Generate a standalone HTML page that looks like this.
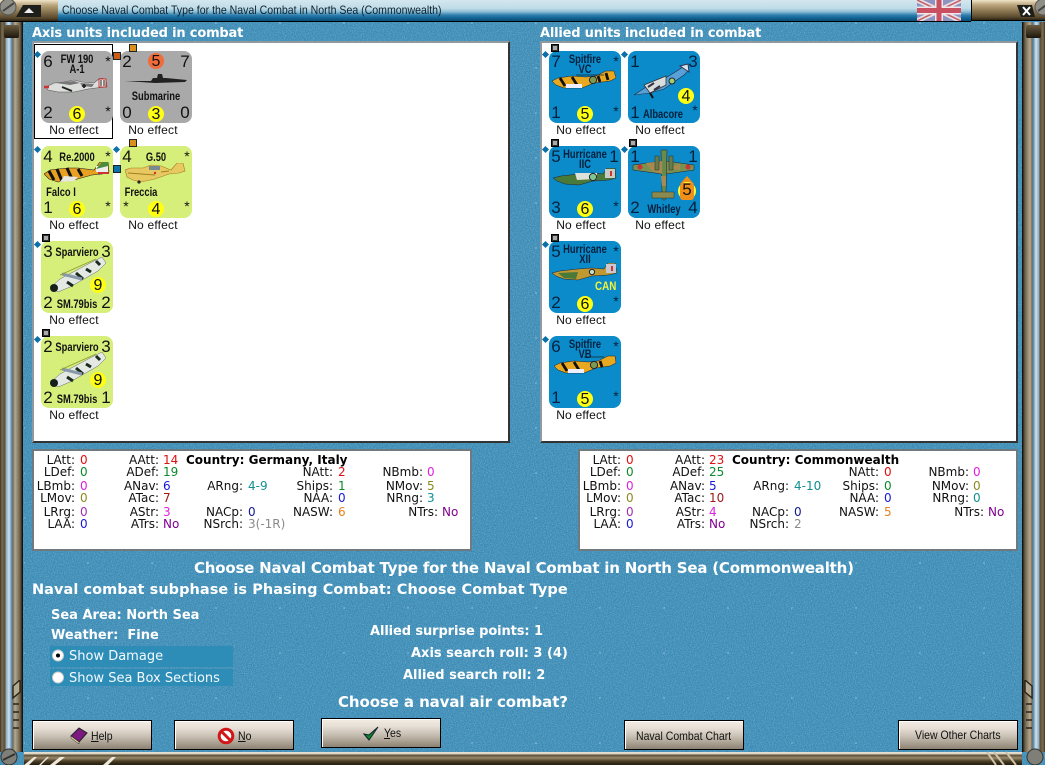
<!DOCTYPE html>
<html><head><meta charset="utf-8"><title>Naval Combat</title>
<style>
html,body{margin:0;padding:0;background:#3887b2}
#p{position:relative;width:1045px;height:765px;overflow:hidden;background:#3887b2;font-family:"Liberation Sans",sans-serif}
#p div,#p span,#p svg{position:absolute}
#dots{left:24px;top:22px;width:998px;height:730px;opacity:.55;background-image:radial-gradient(circle at 1px 1px,#dfeef6 .6px,transparent .9px);background-size:64px 45px;background-position:-1px 0}
.h{color:#fff;font:bold 13px "DejaVu Sans",sans-serif;white-space:nowrap;line-height:16px}
.w{left:32px;top:41px;width:474px;height:398px;background:#fff;border:2px solid;border-color:#8f9aa0 #333 #333 #8f9aa0}
.card{width:72px;height:72px;border-radius:8px;overflow:hidden}
.g{background:#a9a9a9;color:#111}.l{background:#d6ee7a;color:#111}.b{background:#0b8bc9;color:#04203c}
.n{font-size:17px;line-height:18px;width:14px;text-align:center}
.tl{left:0;top:2px}.tr{right:0;top:2px}.bl{left:0;bottom:1px}.br{right:0;bottom:1px}
.st{font-size:14px;line-height:14px;width:10px;text-align:center}
.str{right:0;top:3px}.sbr{right:0;bottom:5px}
.nm{left:-10px;width:92px;text-align:center;font-weight:bold;font-size:12px;line-height:12px;transform:scaleX(.78);white-space:nowrap}
.cy{border-radius:50%;background:#ffff14;width:16px;height:16px;color:#111;font-size:16px;line-height:17px;text-align:center}
.ctr{left:28px;bottom:1px}
.ne{font-size:12px;color:#111;width:72px;text-align:center;line-height:14px;white-space:nowrap;margin-top:-1px;letter-spacing:.2px}
.dia{width:5px;height:5px;background:#0b6fa8;transform:rotate(45deg)}
.sq{width:6px;height:6px;border:1px solid #000;background:#aaa;box-shadow:0 0 0 1px #333 inset}
.sq2{width:6px;height:6px;border:1px solid #222;background:#d8901c}
.st-p{width:440px;height:102px;top:449px;background:#fff;border:2px solid #6e7a80;box-sizing:border-box;font:12px/13px "DejaVu Sans",sans-serif;color:#111}
.st-p span{white-space:nowrap}
.k{width:70px;text-align:right}
.c1{left:-29px}.c2{left:55px}.c3{left:139px}.c4{left:229px}.c5{left:319px}
.v1{left:46px}.v2{left:129px}.v3{left:214px}.v4{left:304px}.v5{left:393px}
.r1{top:3px}.r2{top:15px}.r3{top:29px}.r4{top:41px}.r5{top:55px}.r6{top:67px}
.R{color:#e01010}.G{color:#0a8a2a}.M{color:#e020e0}.O{color:#8a8a20}.Pu{color:#a030b0}.B{color:#1818d8}.T{color:#109090}.DR{color:#a01818}.N{color:#101890}.Or{color:#e88020}.Gy{color:#8a8a8a}.V{color:#800090}
.btn{width:118px;height:28px;border:1px solid #000;background:linear-gradient(#f3ece4 0,#e8e0d6 25%,#c8c0b4 55%,#a89f90 80%,#8c8373 100%);box-shadow:inset 1px 1px 0 #fff;font-size:12px;color:#111}
.btn span{white-space:nowrap;line-height:14px;transform-origin:0 0;transform:scaleX(.875)}
.frame{top:22px;width:23px;height:730px}
</style></head><body>
<div id="p">
<svg style="left:0;top:0" width="1045" height="765"><filter id="nz"><feTurbulence type="fractalNoise" baseFrequency="0.95" numOctaves="2" seed="4"/><feColorMatrix values="0 0 0 0 0.12  0 0 0 0 0.40  0 0 0 0 0.60  0 0 0 1.4 -.5"/></filter><rect width="1045" height="765" filter="url(#nz)"/><filter id="nz2"><feTurbulence type="fractalNoise" baseFrequency="0.9" numOctaves="2" seed="9"/><feColorMatrix values="0 0 0 0 0.36  0 0 0 0 0.62  0 0 0 0 0.78  0 0 0 1 -.45"/></filter><rect width="1045" height="765" filter="url(#nz2)"/></svg>
<div id="dots"></div>

<!-- title bar -->
<div style="left:58px;top:0;width:913px;height:21px;background:linear-gradient(#d3e7ef 0,#bfdce8 40%,#8fc0d6 55%,#2d7fae 72%,#0f5f90 88%,#0c4c74 100%);border-bottom:1px solid #000"></div>
<span style="left:62px;top:3px;font-size:12px;line-height:14px;color:#10202c;white-space:nowrap;transform-origin:0 0;transform:scaleX(.88)">Choose Naval Combat Type for the Naval Combat in North Sea (Commonwealth)</span>
<svg style="left:917px;top:0" width="44" height="21" viewBox="0 0 44 21"><rect width="44" height="21" fill="#8d94c0"/><path d="M0 0L44 21M44 0L0 21" stroke="#e8e0e4" stroke-width="5"/><path d="M0 0L44 21M44 0L0 21" stroke="#c8606c" stroke-width="1.6"/><path d="M22 0V21M0 10.5H44" stroke="#eee6ea" stroke-width="8"/><path d="M22 0V21M0 10.5H44" stroke="#c85060" stroke-width="5"/></svg>
<!-- top caps -->
<div style="left:0;top:0;width:58px;height:21px;background:linear-gradient(#efe4c8 0,#b9a47c 25%,#8a7650 55%,#5a4a2e 85%,#2c2414 100%);border-bottom:1px solid #000"></div>
<div style="left:971px;top:0;width:74px;height:21px;background:linear-gradient(#efe4c8 0,#b9a47c 25%,#8a7650 55%,#5a4a2e 85%,#2c2414 100%);border-left:1px solid #000;border-bottom:1px solid #000;box-sizing:border-box"></div>
<svg style="left:0;top:0" width="58" height="21"><circle cx="8" cy="7" r="8" fill="#8f8f88" stroke="#555"/><path d="M3 11L14 3" stroke="#444" stroke-width="2"/><path d="M16 17L23 5H41V17Z" fill="#1e1e1a"/><path d="M24 13L29 8L34 13Z" fill="#eee"/></svg>
<svg style="left:1010px;top:0" width="35" height="21"><path d="M7 5H22L25 17H11Z" fill="#1e1e1a"/><path d="M13 7L20 15M20 7L13 15" stroke="#fff" stroke-width="2"/><circle cx="33" cy="7" r="8" fill="#8f8f88" stroke="#555"/><path d="M28 11L39 3" stroke="#444" stroke-width="2"/></svg>

<!-- side frames -->
<div class="frame" style="left:0;background:linear-gradient(90deg,#3c3222 0,#7a6c50 2px,#5c4e36 5px,#8aa8be 6px,#cfe2ee 9px,#4f80a6 12px,#7a6e58 13px,#b5aa90 15px,#6c604a 20px,#2c2418 22px,#000 23px)"></div>
<div class="frame" style="left:1022px;background:linear-gradient(90deg,#000 0,#2c2418 1px,#6c604a 3px,#b5aa90 8px,#7a6e58 10px,#4f80a6 11px,#cfe2ee 14px,#8aa8be 17px,#5c4e36 18px,#7a6c50 21px,#3c3222 23px)"></div>
<div style="left:4px;top:25px;width:15px;height:13px;background:linear-gradient(#6c5c40,#1c160c);border-radius:2px"></div>
<div style="left:1026px;top:25px;width:15px;height:13px;background:linear-gradient(#6c5c40,#1c160c);border-radius:2px"></div>
<svg style="left:12px;top:680px" width="10" height="60"><path d="M1 6L8 0V12L1 18ZM1 24H7M1 32H7M1 40H7M1 48H7" stroke="#2a2418" stroke-width="1.4" fill="#b5aa90"/></svg>
<svg style="left:1023px;top:680px" width="10" height="60"><path d="M9 6L2 0V12L9 18ZM3 24H9M3 32H9M3 40H9M3 48H9" stroke="#2a2418" stroke-width="1.4" fill="#b5aa90"/></svg>
<!-- bottom bar -->
<div style="left:24px;top:752px;width:998px;height:13px;background:linear-gradient(#e8e4d8 0,#d8d0bc 2px,#5c4e36 3px,#98886a 6px,#4c4028 9px,#2a2212 12px)"></div>
<svg style="left:0;top:745px" width="120" height="20"><circle cx="9" cy="12" r="8" fill="#7f7f78" stroke="#333"/><path d="M3 15L15 9" stroke="#333" stroke-width="2"/><path d="M24 20L34 12H37L29 20ZM39 20L47 12H49L41 20ZM50 20L60 12H65L55 20ZM103 20L112 12H116L108 20Z" fill="#efe9dc"/></svg>
<svg style="left:980px;top:745px" width="65" height="20"><circle cx="55" cy="12" r="8" fill="#7f7f78" stroke="#333"/><path d="M7 7L16 20M14 7L24 20M26 7L36 20" stroke="#cfc4aa" stroke-width="2"/></svg>

<!-- headings -->
<div class="h" style="left:32px;top:26px;letter-spacing:-.18px">Axis units included in combat</div>
<div class="h" style="left:540px;top:26px;letter-spacing:-.2px">Allied units included in combat</div>

<div class="w"></div>
<div class="w" style="left:540px"></div>

<svg width="0" height="0" style="left:0;top:0"><defs>
<g id="bomb"><path d="M1 30L10 22 40 6 52 0 56 6 48 14 20 30 8 35Z" fill="#e4e9e4" stroke="#667" stroke-width=".5"/><circle cx="4" cy="31" r="4" fill="#15201a"/><path d="M17 25L23 29M26 16L33 22M36 12L41 15M46 4L50 8" stroke="#1a2a20" stroke-width="3"/><path d="M12 17L32 22" stroke="#89a" stroke-width="3"/><path d="M10 18L46 2" stroke="#8a9a30" stroke-width=".7"/></g>
</defs></svg>

<!-- selection box -->
<div style="left:34px;top:44px;width:77px;height:93px;border:1px solid #000"></div>

<!-- Axis cards -->
<div class="card g" style="left:41px;top:51px">
 <span class="n tl">6</span><span class="st str">*</span><span class="nm" style="top:2px">FW 190</span><span class="nm" style="top:12px">A-1</span>
 <svg style="left:3px;top:27px" width="64" height="16"><path d="M2 9L10 5 20 4 30 2 38 4 50 5 56 0 62 1 63 9 52 10 44 11 30 14 14 14 4 12Z" fill="#dcdedc" stroke="#555" stroke-width=".6"/><path d="M12 5L30 3 36 5 26 7ZM36 5L50 6 48 9 38 8Z" fill="#777"/><path d="M18 9L28 13M40 6V10M38 8H42" stroke="#222" stroke-width="1.8"/><path d="M55 1H62V9H55Z" fill="#eee" stroke="#c33"/><path d="M57 2V8M60 2V8" stroke="#222" stroke-width="1"/><path d="M0 9H5" stroke="#c33" stroke-width="2.4"/></svg>
 <span class="n bl">2</span><span class="cy ctr">6</span><span class="st sbr">*</span>
</div>
<div class="ne" style="left:38px;top:124px">No effect</div>
<div class="card g" style="left:120px;top:51px">
 <span class="n tl">2</span><span class="cy" style="left:28px;top:2px;background:#f06c38">5</span><span class="n tr">7</span>
 <svg style="left:5px;top:21px" width="62" height="14"><path d="M0 9L26 9 28 6H32L33 2H37L38 6H41L62 8 60 10 30 11Z" fill="#222"/></svg>
 <span class="nm" style="top:39px">Submarine</span>
 <span class="n bl">0</span><span class="cy ctr">3</span><span class="n br">0</span>
</div>
<div class="ne" style="left:117px;top:124px">No effect</div>

<div class="card l" style="left:41px;top:146px">
 <span class="n tl">4</span><span class="st str">*</span><span class="nm" style="top:5px">Re.2000</span>
 <svg style="left:3px;top:16px" width="66" height="22"><path d="M0 12L6 8 14 7 24 6 34 6 50 8 56 0 64 0 65 10 58 12 48 13 30 18 14 20 5 17Z" fill="#e8a020" stroke="#222" stroke-width=".6"/><path d="M5 9L10 18M13 7L18 19M23 6L28 17M34 7L38 14" stroke="#111" stroke-width="3"/><path d="M20 14L34 15 30 19 16 20Z" fill="#e8e8e0"/><path d="M52 4H64V10H52Z" fill="#eee"/><path d="M52 7L58 0H64V4Z" fill="#4a8c3a"/><path d="M54 10H65V12H54Z" fill="#c33"/></svg>
 <span class="nm" style="top:40px;left:-26px">Falco I</span>
 <span class="n bl">1</span><span class="cy ctr">6</span><span class="st sbr">*</span>
</div>
<div class="ne" style="left:38px;top:219px">No effect</div>
<div class="card l" style="left:120px;top:146px">
 <span class="n tl">4</span><span class="st str">*</span><span class="nm" style="top:5px">G.50</span>
 <svg style="left:5px;top:17px" width="64" height="22"><path d="M0 7L6 5 18 5 26 2 36 3 46 7 52 0 58 0 60 8 54 10 44 11 30 16 16 19 8 17 2 14Z" fill="#e8c860" stroke="#a08020" stroke-width=".6"/><path d="M24 3H35V7H24Z" fill="#7a8a90"/><path d="M3 10L30 12M36 9L44 8" stroke="#a08020"/><circle cx="14" cy="19" r="1.6" fill="#222"/><circle cx="30" cy="10" r="1.2" fill="#c33"/></svg>
 <span class="nm" style="top:40px;left:-25px">Freccia</span>
 <span class="st" style="left:1px;bottom:5px">*</span><span class="cy ctr">4</span><span class="st sbr">*</span>
</div>
<div class="ne" style="left:117px;top:219px">No effect</div>

<div class="card l" style="left:41px;top:241px">
 <span class="n tl">3</span><span class="nm" style="top:5px">Sparviero</span><span class="n tr">3</span>
 <svg style="left:9px;top:16px" width="56" height="36"><use href="#bomb"/></svg>
 <span class="cy" style="left:49px;top:36px">9</span>
 <span class="n bl">2</span><span class="nm" style="bottom:3px">SM.79bis</span><span class="n br">2</span>
</div>
<div class="ne" style="left:38px;top:314px">No effect</div>
<div class="card l" style="left:41px;top:336px">
 <span class="n tl">2</span><span class="nm" style="top:5px">Sparviero</span><span class="n tr">3</span>
 <svg style="left:9px;top:16px" width="56" height="36"><use href="#bomb"/></svg>
 <span class="cy" style="left:49px;top:36px">9</span>
 <span class="n bl">2</span><span class="nm" style="bottom:3px">SM.79bis</span><span class="n br">1</span>
</div>
<div class="ne" style="left:38px;top:409px">No effect</div>

<!-- Allied cards -->
<div class="card b" style="left:549px;top:51px">
 <span class="n tl">7</span><span class="st str">*</span><span class="nm" style="top:2px">Spitfire</span><span class="nm" style="top:12px">VC</span>
 <svg style="left:3px;top:19px" width="66" height="22"><path d="M0 11L6 8 20 6 34 7 44 6 54 1 62 1 64 8 58 11 42 13 30 18 12 18 4 15Z" fill="#e8a820" stroke="#222" stroke-width=".5"/><path d="M8 8L13 16M20 7L25 15M46 6L48 12M54 3L56 10" stroke="#111" stroke-width="2.8"/><circle cx="41" cy="10" r="3.6" fill="#7a9a50" stroke="#223"/><path d="M14 14H30V18H14Z" fill="#eef"/><path d="M24 5H52" stroke="#123" stroke-width=".7"/></svg>
 <span class="n bl">1</span><span class="cy ctr">5</span><span class="st sbr">*</span>
</div>
<div class="ne" style="left:545px;top:124px">No effect</div>
<div class="card b" style="left:628px;top:51px">
 <span class="n tl">1</span><span class="n tr">3</span>
 <svg style="left:6px;top:12px" width="58" height="36"><path d="M0 32L12 24 30 16 46 6 52 2 55 7 50 12 30 26 16 30Z" fill="#5aa0d8" stroke="#1a3040" stroke-width=".6"/><path d="M10 22L32 13 32 22 16 30Z" fill="#d8dede" stroke="#333" stroke-width=".8"/><path d="M14 24L20 20M20 27L26 23" stroke="#334" stroke-width="2"/><circle cx="38" cy="18" r="3" fill="#9ad070" stroke="#223"/><path d="M46 3L54 1 55 9Z" fill="#d8e4ee" stroke="#335"/><path d="M16 30L19 35" stroke="#111" stroke-width="2"/></svg>
 <span class="cy" style="left:50px;top:37px">4</span>
 <span class="n bl">1</span><span class="nm" style="bottom:3px;left:-11px">Albacore</span><span class="st sbr" style="bottom:6px">*</span>
</div>
<div class="ne" style="left:624px;top:124px">No effect</div>

<div class="card b" style="left:549px;top:146px">
 <span class="n tl">5</span><span class="nm" style="top:2px">Hurricane</span><span class="nm" style="top:12px">IIC</span><span class="n tr">1</span>
 <svg style="left:4px;top:22px" width="64" height="20"><path d="M0 10L8 8 26 6 40 5 50 6 54 0 62 0 63 10 56 12 40 13 26 17 12 16 4 13Z" fill="#4a7a3a" stroke="#223" stroke-width=".5"/><path d="M22 5L44 5 44 11 24 12Z" fill="#dfe2d8"/><path d="M52 1H62V10H52Z" fill="#c8ccc4"/><path d="M58 3V8" stroke="#c33" stroke-width="2"/><circle cx="40" cy="9" r="3.6" fill="#7ec890" stroke="#223"/></svg>
 <span class="n bl">3</span><span class="cy ctr">6</span><span class="st sbr">*</span>
</div>
<div class="ne" style="left:545px;top:219px">No effect</div>
<div class="card b" style="left:628px;top:146px">
 <span class="n tl">1</span><span class="n tr">1</span>
 <svg style="left:0;top:0" width="72" height="72"><path d="M5 19L34 15H38L66 19V24L38 28H34L5 24Z" fill="#7a9050" stroke="#223" stroke-width=".5"/><path d="M33 4H39L38 46 37 54H35L34 46Z" fill="#6a8a4a" stroke="#223" stroke-width=".5"/><path d="M18 17L34 15V28L24 25ZM40 22L52 18V24ZM33 30H38V40H34Z" fill="#a88a50"/><path d="M27 10h4v14h-4zM41 10h4v14h-4z" fill="#6a7a48" stroke="#233" stroke-width=".5"/><circle cx="12" cy="21" r="2.5" fill="#c33"/><circle cx="60" cy="21" r="2.5" fill="#c33"/><path d="M24 46H46V52H24Z" fill="#8a8a50" stroke="#332" stroke-width=".5"/></svg>
 <svg style="left:48px;top:26px" width="22" height="30"><path d="M4 12L11 4 18 12Z" fill="#f09018"/><circle cx="11" cy="19" r="9" fill="#ffff30"/><rect x="4" y="11" width="14" height="17" rx="3" fill="#f09018"/></svg>
 <span class="n" style="left:52px;top:35px;color:#111">5</span>
 <span class="n bl">2</span><span class="nm" style="bottom:3px;left:-10px">Whitley</span><span class="n br">4</span>
</div>
<div class="ne" style="left:624px;top:219px">No effect</div>

<div class="card b" style="left:549px;top:241px">
 <span class="n tl">5</span><span class="st str">*</span><span class="nm" style="top:2px">Hurricane</span><span class="nm" style="top:12px">XII</span>
 <svg style="left:3px;top:22px" width="66" height="20"><path d="M0 10L8 8 26 6 40 5 52 6 56 0 63 0 65 10 56 12 40 13 26 17 12 16 4 13Z" fill="#c09a30" stroke="#223" stroke-width=".5"/><path d="M6 10L26 9 24 16 12 15Z" fill="#4a7a3a"/><path d="M54 1H64V10H54Z" fill="#c8c8d0"/><path d="M60 3V8" stroke="#c33" stroke-width="2"/><circle cx="40" cy="9" r="2.6" fill="#c8dcc0" stroke="#223"/></svg>
 <span style="left:46px;top:39px;font-size:12px;font-weight:bold;color:#f4f43a;line-height:12px;transform-origin:0 0;transform:scaleX(.82)">CAN</span>
 <span class="n bl">2</span><span class="cy ctr">6</span><span class="st sbr">*</span>
</div>
<div class="ne" style="left:545px;top:314px">No effect</div>
<div class="card b" style="left:549px;top:336px">
 <span class="n tl">6</span><span class="st str">*</span><span class="nm" style="top:2px">Spitfire</span><span class="nm" style="top:12px">VB</span>
 <svg style="left:5px;top:19px" width="64" height="22"><path d="M0 11L6 8 20 6 34 7 44 6 54 1 61 1 62 8 56 11 42 13 30 18 12 18 4 15Z" fill="#e8a820" stroke="#222" stroke-width=".5"/><path d="M8 8L13 16M20 7L25 15M46 6L48 12" stroke="#111" stroke-width="2.8"/><circle cx="40" cy="10" r="3.6" fill="#7a9a50" stroke="#223"/><path d="M14 14H30V18H14Z" fill="#eef"/><path d="M30 2H50" stroke="#123" stroke-width=".7"/></svg>
 <span class="n bl">1</span><span class="cy ctr">5</span><span class="st sbr">*</span>
</div>
<div class="ne" style="left:545px;top:409px">No effect</div>

<!-- markers -->
<div class="dia" style="left:35px;top:52px"></div><div class="dia" style="left:35px;top:147px"></div><div class="dia" style="left:114px;top:147px"></div><div class="dia" style="left:35px;top:242px"></div><div class="dia" style="left:35px;top:337px"></div>
<div class="dia" style="left:543px;top:52px"></div><div class="dia" style="left:622px;top:52px"></div><div class="dia" style="left:543px;top:147px"></div><div class="dia" style="left:622px;top:147px"></div><div class="dia" style="left:543px;top:242px"></div><div class="dia" style="left:543px;top:337px"></div>
<div class="sq2" style="left:113px;top:52px;background:#c8601c"></div><div class="sq2" style="left:113px;top:165px;background:#0b70ae"></div>
<div class="sq2" style="left:129px;top:44px"></div><div class="sq2" style="left:129px;top:139px"></div>
<div class="sq" style="left:42px;top:234px"></div><div class="sq" style="left:42px;top:329px"></div>
<div class="sq" style="left:551px;top:44px"></div><div class="sq" style="left:551px;top:139px"></div><div class="sq" style="left:629px;top:139px"></div><div class="sq" style="left:551px;top:234px"></div>

<!-- stats left -->
<div class="st-p" style="left:32px">
<span class="k c1 r1">LAtt:</span><span class="v1 r1 R">0</span><span class="k c1 r2">LDef:</span><span class="v1 r2 G">0</span><span class="k c1 r3">LBmb:</span><span class="v1 r3 M">0</span><span class="k c1 r4">LMov:</span><span class="v1 r4 O">0</span><span class="k c1 r5">LRrg:</span><span class="v1 r5 Pu">0</span><span class="k c1 r6">LAA:</span><span class="v1 r6 B">0</span>
<span class="k c2 r1">AAtt:</span><span class="v2 r1 R">14</span><span class="k c2 r2">ADef:</span><span class="v2 r2 G">19</span><span class="k c2 r3">ANav:</span><span class="v2 r3 B">6</span><span class="k c2 r4">ATac:</span><span class="v2 r4 DR">7</span><span class="k c2 r5">AStr:</span><span class="v2 r5 M">3</span><span class="k c2 r6">ATrs:</span><span class="v2 r6 V">No</span>
<span class="r1" style="left:152px;font-weight:bold;color:#000">Country: Germany, Italy</span>
<span class="k c3 r3">ARng:</span><span class="v3 r3 T">4-9</span><span class="k c3 r5">NACp:</span><span class="v3 r5 N">0</span><span class="k c3 r6">NSrch:</span><span class="v3 r6 Gy">3(-1R)</span>
<span class="k c4 r2">NAtt:</span><span class="v4 r2 R">2</span><span class="k c4 r3">Ships:</span><span class="v4 r3 G">1</span><span class="k c4 r4">NAA:</span><span class="v4 r4 B">0</span><span class="k c4 r5">NASW:</span><span class="v4 r5 Or">6</span>
<span class="k c5 r2">NBmb:</span><span class="v5 r2 M">0</span><span class="k c5 r3">NMov:</span><span class="v5 r3 O">5</span><span class="k c5 r4">NRng:</span><span class="v5 r4 T">3</span><span class="k c5 r5" style="left:334px">NTrs:</span><span class="r5 V" style="left:408px">No</span>
</div>
<!-- stats right -->
<div class="st-p" style="left:578px">
<span class="k c1 r1">LAtt:</span><span class="v1 r1 R">0</span><span class="k c1 r2">LDef:</span><span class="v1 r2 G">0</span><span class="k c1 r3">LBmb:</span><span class="v1 r3 M">0</span><span class="k c1 r4">LMov:</span><span class="v1 r4 O">0</span><span class="k c1 r5">LRrg:</span><span class="v1 r5 Pu">0</span><span class="k c1 r6">LAA:</span><span class="v1 r6 B">0</span>
<span class="k c2 r1">AAtt:</span><span class="v2 r1 R">23</span><span class="k c2 r2">ADef:</span><span class="v2 r2 G">25</span><span class="k c2 r3">ANav:</span><span class="v2 r3 B">5</span><span class="k c2 r4">ATac:</span><span class="v2 r4 DR">10</span><span class="k c2 r5">AStr:</span><span class="v2 r5 M">4</span><span class="k c2 r6">ATrs:</span><span class="v2 r6 V">No</span>
<span class="r1" style="left:152px;font-weight:bold;color:#000">Country: Commonwealth</span>
<span class="k c3 r3">ARng:</span><span class="v3 r3 T">4-10</span><span class="k c3 r5">NACp:</span><span class="v3 r5 N">0</span><span class="k c3 r6">NSrch:</span><span class="v3 r6 Gy">2</span>
<span class="k c4 r2">NAtt:</span><span class="v4 r2 R">0</span><span class="k c4 r3">Ships:</span><span class="v4 r3 G">0</span><span class="k c4 r4">NAA:</span><span class="v4 r4 B">0</span><span class="k c4 r5">NASW:</span><span class="v4 r5 Or">5</span>
<span class="k c5 r2">NBmb:</span><span class="v5 r2 M">0</span><span class="k c5 r3">NMov:</span><span class="v5 r3 O">0</span><span class="k c5 r4">NRng:</span><span class="v5 r4 T">0</span><span class="k c5 r5" style="left:334px">NTrs:</span><span class="r5 V" style="left:408px">No</span>
</div>

<!-- text -->
<div class="h" style="left:194px;top:560px;font-size:15px;letter-spacing:-.21px">Choose Naval Combat Type for the Naval Combat in North Sea (Commonwealth)</div>
<div class="h" style="left:32px;top:582px;font-size:14.5px;letter-spacing:.05px">Naval combat subphase is Phasing Combat: Choose Combat Type</div>
<div class="h" style="left:51px;top:608px">Sea Area:&nbsp;North Sea</div>
<div class="h" style="left:51px;top:628px">Weather:&nbsp;&nbsp;Fine</div>
<div style="left:50px;top:646px;width:183px;height:21px;background:#2e8db6"></div>
<div style="left:50px;top:669px;width:183px;height:17px;background:#2e8db6"></div>
<svg style="left:50px;top:646px" width="20" height="40"><circle cx="8" cy="9.5" r="5.5" fill="#fff" stroke="#ccc"/><circle cx="8" cy="9.5" r="2" fill="#000"/><circle cx="8" cy="31.5" r="5.5" fill="#fff" stroke="#ccc"/></svg>
<span style="left:69px;top:649px;color:#f4fbff;font:13px/16px 'DejaVu Sans',sans-serif;white-space:nowrap">Show Damage</span>
<span style="left:69px;top:671px;color:#f4fbff;font:13px/16px 'DejaVu Sans',sans-serif;white-space:nowrap">Show Sea Box Sections</span>
<div class="h" style="left:370px;top:624px;letter-spacing:-.1px">Allied surprise points:&nbsp;1</div>
<div class="h" style="left:411px;top:646px">Axis search roll:&nbsp;3 (4)</div>
<div class="h" style="left:403px;top:668px">Allied search roll:&nbsp;2</div>
<div class="h" style="left:338px;top:694px;font-size:15px;letter-spacing:-.1px">Choose a naval air combat?</div>

<!-- buttons -->
<div class="btn" style="left:32px;top:720px">
<svg style="left:37px;top:6px" width="18" height="17"><path d="M1 9L9 1 17 6 9 15Z" fill="#7a1a80" stroke="#222"/><path d="M1 9L9 15V17L1 11Z" fill="#e8d8a0" stroke="#222" stroke-width=".5"/></svg>
<span style="left:58px;top:8px"><u>H</u>elp</span></div>
<div class="btn" style="left:174px;top:720px">
<svg style="left:42px;top:6px" width="18" height="18"><circle cx="9" cy="9" r="6.8" fill="#fff" stroke="#d01818" stroke-width="3"/><path d="M4 4L14 14" stroke="#d01818" stroke-width="3"/></svg>
<span style="left:63px;top:8px"><u>N</u>o</span></div>
<div class="btn" style="left:321px;top:718px">
<svg style="left:40px;top:5px" width="18" height="18"><path d="M2 10L7 16 16 3 7 11Z" fill="#0a8a20" stroke="#123" stroke-width="1"/></svg>
<span style="left:62px;top:7px"><u>Y</u>es</span></div>
<div class="btn" style="left:624px;top:720px"><span style="left:11px;top:8px">Naval Combat Chart</span></div>
<div class="btn" style="left:898px;top:720px"><span style="left:16px;top:7px">View Other Charts</span></div>
</div>
</body></html>
